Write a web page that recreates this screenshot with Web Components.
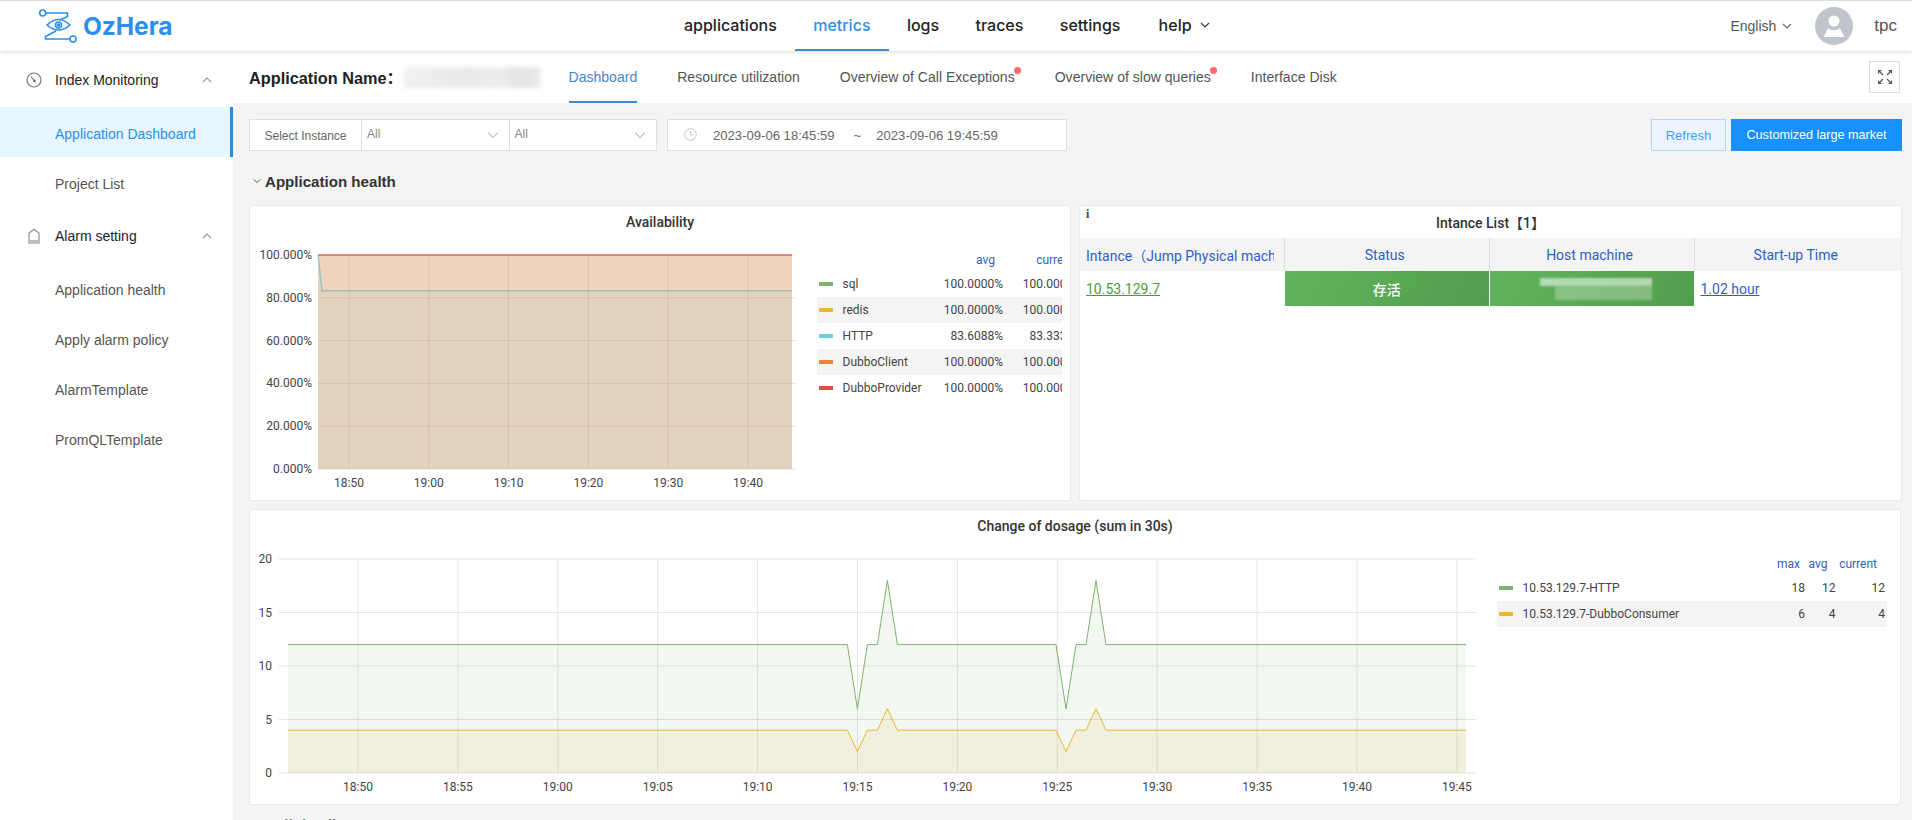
<!DOCTYPE html>
<html lang="en">
<head>
<meta charset="utf-8">
<title>OzHera</title>
<style>
    html, body { margin: 0; height: 100%; overflow: hidden; background: #f4f4f4; }
    body { font-family: "Liberation Sans", "Noto Sans CJK SC", sans-serif; color: #333; }
    #page { display: flex; flex-direction: column; height: 820px; overflow: hidden; }
    #below { display: flex; flex: 1; min-height: 0; }
</style>
</head>
<body>
<div id="page">
    <oz-header></oz-header>
    <div id="below">
        <oz-sidebar></oz-sidebar>
        <oz-main></oz-main>
    </div>
</div>
<script>
"use strict";
const CHEVRON = (size, color, d = 'M1 3l4 4 4-4') => `<svg width="${size}" height="${size}" viewBox="0 0 10 10" fill="none" stroke="${color}" stroke-width="1.1"><path d="${d}"/></svg>`;

class OzHeader extends HTMLElement {
    constructor() {
        super();
        this.attachShadow({ mode: 'open' });
    }
    connectedCallback() {
        const items = ['applications', 'metrics', 'logs', 'traces', 'settings'];
        this.shadowRoot.innerHTML = `
            <style>
                :host {
                    display: flex;
                    align-items: center;
                    flex: none;
                    height: 50px;
                    background: #fff;
                    border-top: 1px solid #dedede;
                    box-shadow: 0 1px 4px rgba(0, 0, 0, .14);
                    position: relative;
                    z-index: 2;
                }
                .logo { display: flex; align-items: center; margin-left: 38px; width: 646px; }
                .logo span { font: 700 24.6px Inter, sans-serif; color: #2a8fee; margin-left: 5px; letter-spacing: -.1px; }
                nav { display: flex; height: 100%; }
                nav a {
                    font: 500 16px Inter, sans-serif;
                    color: #222;
                    padding: 0 18.2px;
                    display: flex;
                    align-items: center;
                    box-sizing: border-box;
                    border-bottom: 2px solid transparent;
                    gap: 8px;
                }
                nav a:first-child { padding-left: 0; }
                nav a:last-child { padding-left: 20px; }
                nav a.active { color: #2a8fee; border-bottom-color: #3d8ad2; }
                .right { display: flex; align-items: center; margin-left: auto; font-size: 14px; color: #555; }
                .lang { display: flex; align-items: center; gap: 6px; margin-right: 23px; font-size: 14px; }
                .user { margin: 0 15px 0 21px; font-size: 17px; }
            </style>
            <div class="logo">
                <svg width="40" height="36" viewBox="38 9 40 36" fill="none" stroke="#2a8fee" stroke-width="1.6">
                    <circle cx="42.7" cy="14" r="3"/>
                    <path d="M45.7 14H67.5V17.5L60 21"/>
                    <path d="M47 26Q58.5 15 70 26Q58.5 36 47 26Z"/>
                    <circle cx="58.5" cy="26" r="3"/>
                    <circle cx="58.5" cy="26" r="1" fill="#2a8fee"/>
                    <path d="M56 32L45.5 37.5V40H70"/>
                    <circle cx="73" cy="40" r="3"/>
                </svg>
                <span>OzHera</span>
            </div>
            <nav>
                ${items.map(i => `<a class="${i === 'metrics' ? 'active' : ''}">${i}</a>`).join('')}
                <a>help ${CHEVRON(10, '#333')}</a>
            </nav>
            <div class="right">
                <div class="lang">English ${CHEVRON(10, '#666')}</div>
                <svg width="38" height="38" viewBox="0 0 38 38">
                    <circle cx="19" cy="19" r="19" fill="#c0c4cc"/>
                    <circle cx="19" cy="14" r="5.5" fill="#fff"/>
                    <path d="M8.5 30L13 21.5Q19 25 25 21.5L29.5 30Z" fill="#fff"/>
                </svg>
                <span class="user">tpc</span>
            </div>
        `;
    }
}
customElements.define('oz-header', OzHeader);

class OzSideItem extends HTMLElement {
    constructor() {
        super();
        this.attachShadow({ mode: 'open' });
    }
    connectedCallback() {
        this.shadowRoot.innerHTML = `
            <style>
                :host {
                    display: flex;
                    align-items: center;
                    height: 50px;
                    box-sizing: border-box;
                    padding-left: 55px;
                    font-size: 14px;
                    color: #555;
                }
                :host([active]) {
                    background: #e6f6fe;
                    color: #2a8fee;
                    border-right: 3px solid #2a8ae4;
                }
                span { position: relative; top: 2px; }
            </style>
            <span><slot></slot></span>
        `;
    }
}
customElements.define('oz-side-item', OzSideItem);

class OzSideGroup extends HTMLElement {
    constructor() {
        super();
        this.attachShadow({ mode: 'open' });
    }
    connectedCallback() {
        this.shadowRoot.innerHTML = `
            <style>
                :host { display: block; }
                .head {
                    display: flex;
                    align-items: center;
                    height: 52px;
                    margin-bottom: 1px;
                    padding: 0 21px 0 26px;
                    font-size: 14px;
                    color: #222;
                }
                .name { margin-left: 13px; flex: 1; }
            </style>
            <div class="head">
                <slot name="icon"></slot>
                <span class="name">${this.getAttribute('label')}</span>
                ${CHEVRON(10, '#999', 'M1 7l4-4 4 4')}
            </div>
            <slot></slot>
        `;
    }
}
customElements.define('oz-side-group', OzSideGroup);

class OzSidebar extends HTMLElement {
    constructor() {
        super();
        this.attachShadow({ mode: 'open' });
    }
    connectedCallback() {
        this.shadowRoot.innerHTML = `
            <style>
                :host { display: block; flex: none; width: 233px; background: #fff; padding-top: 3px; box-sizing: border-box; }
                .alarm { margin-top: 3px; }
            </style>
            <oz-side-group label="Index Monitoring">
                <svg slot="icon" width="16" height="16" viewBox="0 0 16 16" fill="none" stroke="#777" stroke-width="1.2">
                    <circle cx="8" cy="8" r="7"/><path d="M5 4.5L8.5 9"/><circle cx="8.5" cy="9" r=".8" fill="#777"/>
                </svg>
                <oz-side-item active>Application Dashboard</oz-side-item>
                <oz-side-item>Project List</oz-side-item>
            </oz-side-group>
            <oz-side-group class="alarm" label="Alarm setting">
                <svg slot="icon" width="16" height="16" viewBox="0 0 16 16" fill="none" stroke="#888" stroke-width="1.1">
                    <path d="M3 15V5L8 1.5 13 5V15Z"/><path d="M8 .5V2"/><rect x="4" y="12" width="8" height="2.5" fill="#bbb" stroke="none"/>
                </svg>
                <oz-side-item>Application health</oz-side-item>
                <oz-side-item>Apply alarm policy</oz-side-item>
                <oz-side-item>AlarmTemplate</oz-side-item>
                <oz-side-item>PromQLTemplate</oz-side-item>
            </oz-side-group>
        `;
    }
}
customElements.define('oz-sidebar', OzSidebar);

class OzTabs extends HTMLElement {
    constructor() {
        super();
        this.attachShadow({ mode: 'open' });
    }
    connectedCallback() {
        this.shadowRoot.innerHTML = `
            <style>
                :host {
                    display: flex;
                    align-items: stretch;
                    height: 52px;
                    background: #fff;
                    padding: 0 12px 0 16px;
                }
                .name { font-weight: 700; font-size: 16.3px; color: #222; width: 155px; align-self: center; white-space: nowrap; }
                .blur { width: 137px; height: 21px; align-self: center; background: linear-gradient(90deg, #f1f1f1, #e9e9e9 45%, #eeeeee 70%, #e4e4e4 82%, #ebebeb); filter: blur(2px); margin-right: 27.5px; }
                .tabs { display: flex; gap: 40px; flex: 1; }
                .tab { display: flex; align-items: center; font-size: 14.05px; color: #555; position: relative; border-bottom: 2px solid transparent; margin-top: 2px; }
                .tab.active { color: #3d8ad2; border-bottom-color: #3d8ad2; }
                .tab.dot::after {
                    content: "";
                    position: absolute;
                    right: -6.5px;
                    top: 14px;
                    width: 7px;
                    height: 7px;
                    border-radius: 50%;
                    background: #f56c6c;
                }
                .full {
                    align-self: center;
                    width: 31px;
                    height: 32px;
                    box-sizing: border-box;
                    border: 1px solid #ddd;
                    display: flex;
                    align-items: center;
                    justify-content: center;
                }
            </style>
            <div class="name">Application Name：</div>
            <div class="blur"></div>
            <div class="tabs">
                <div class="tab active">Dashboard</div>
                <div class="tab">Resource utilization</div>
                <div class="tab dot">Overview of Call Exceptions</div>
                <div class="tab dot">Overview of slow queries</div>
                <div class="tab">Interface Disk</div>
            </div>
            <div class="full">
                <svg width="16" height="16" viewBox="0 0 16 16" fill="#555" stroke="#555" stroke-width="1.2">
                    <path d="M1 1H5L1 5Z" stroke="none"/><path d="M3 3L6 6"/>
                    <path d="M15 1H11L15 5Z" stroke="none"/><path d="M13 3L10 6"/>
                    <path d="M1 15H5L1 11Z" stroke="none"/><path d="M3 13L6 10"/>
                    <path d="M15 15H11L15 11Z" stroke="none"/><path d="M13 13L10 10"/>
                </svg>
            </div>
        `;
    }
}
customElements.define('oz-tabs', OzTabs);

class OzFilters extends HTMLElement {
    constructor() {
        super();
        this.attachShadow({ mode: 'open' });
    }
    connectedCallback() {
        const select = `<div class="select"><span>All</span>${CHEVRON(12, '#c0c4cc')}</div>`;
        this.shadowRoot.innerHTML = `
            <style>
                :host { display: flex; height: 32px; margin-top: 16px; }
                .group { display: flex; background: #fff; border: 1px solid #dcdfe6; box-sizing: border-box; width: 408px; margin-left: -1px; }
                .label { width: 112px; flex: none; box-sizing: border-box; font-size: 12px; color: #666; display: flex; align-items: center; justify-content: center; border-right: 1px solid #dcdfe6; padding-top: 1px; }
                .select { flex: 1; display: flex; align-items: center; justify-content: space-between; padding: 0 10px 0 5px; font-size: 12px; color: #888; }
                .select span { position: relative; top: -1px; }
                .select + .select { border-left: 1px solid #dcdfe6; }
                .date { margin-left: 10px; width: 400px; box-sizing: border-box; display: flex; align-items: center; background: #fff; border: 1px solid #dcdfe6; padding-left: 16px; font-size: 13.1px; color: #666; }
                .date svg { margin-right: 16px; position: relative; top: -1px; }
                .tilde { margin: 0 15px 0 19px; }
                .actions { margin-left: auto; display: flex; gap: 5px; margin-right: -1px; }
                button { font: 13px "Liberation Sans", sans-serif; border-radius: 0; cursor: pointer; box-sizing: border-box; height: 32px; }
                .plain { width: 75px; background: #ecf5ff; border: 1px solid #b3d8ff; color: #409eff; }
                .primary { width: 171px; background: #1890ff; border: 1px solid #1890ff; color: #fff; font-size: 12.6px; }
            </style>
            <div class="group">
                <div class="label">Select Instance</div>
                ${select}${select}
            </div>
            <div class="date">
                <svg width="13" height="13" viewBox="0 0 13 13" fill="none" stroke="#c0c4cc" stroke-width="1"><circle cx="6.5" cy="6.5" r="5.8"/><path d="M6.5 3V6.8H9.5"/></svg>
                <span>2023-09-06 18:45:59</span><span class="tilde">~</span><span>2023-09-06 19:45:59</span>
            </div>
            <div class="actions">
                <button class="plain">Refresh</button>
                <button class="primary">Customized large market</button>
            </div>
        `;
    }
}
customElements.define('oz-filters', OzFilters);

class OzSection extends HTMLElement {
    constructor() {
        super();
        this.attachShadow({ mode: 'open' });
    }
    connectedCallback() {
        this.shadowRoot.innerHTML = `
            <style>
                :host { display: flex; align-items: center; height: 55px; box-sizing: border-box; padding: 5px 0 0 3px; font-weight: 700; font-size: 15.1px; color: #333; gap: 4px; }
            </style>
            ${CHEVRON(8, '#444')}<span><slot></slot></span>
        `;
    }
}
customElements.define('oz-section', OzSection);

class OzPanel extends HTMLElement {
    constructor() {
        super();
        this.attachShadow({ mode: 'open' });
    }
    connectedCallback() {
        this.shadowRoot.innerHTML = `
            <style>
                :host {
                    display: block;
                    height: 294px;
                    box-sizing: border-box;
                    background: #fff;
                    box-shadow: 0 0 0 1px #e9e9e9;
                    border-radius: 2px;
                    position: relative;
                    overflow: hidden;
                    min-width: 0;
                }
                .title { height: 32px; display: flex; align-items: center; justify-content: center; font: 500 14px Roboto, "Noto Sans CJK SC", sans-serif; color: #333; }
                .body { display: flex; }
            </style>
            <div class="title">${this.getAttribute('label')}</div>
            <div class="body"><slot></slot></div>
        `;
    }
}
customElements.define('oz-panel', OzPanel);

const COLORS = { green: '#7eb26d', yellow: '#eab839', cyan: '#6ed0e0', orange: '#ef843c', red: '#e24d42' };

function dosage(base, low, high) {
    const pts = [[38, base]];
    for (const start of [597.4, 806]) {
        pts.push([start, base], [start + 10, low], [start + 20, base], [start + 30, base], [start + 40, high], [start + 50, base]);
    }
    pts.push([1216, base]);
    return pts;
}

const CHARTS = {
    availability: {
        width: 567, left: 68, right: 546, top: 17, bottom: 231, max: 100,
        yTicks: [0, 20, 40, 60, 80, 100], yFormat: v => v.toFixed(3) + '%', yRight: 62,
        xStart: 99, xStep: 79.8, xLabels: ['18:50', '19:00', '19:10', '19:20', '19:30', '19:40'],
        series: [
            { color: COLORS.green, hideLine: true, points: [[68, 100], [542, 100]] },
            { color: COLORS.yellow, hideLine: true, points: [[68, 100], [542, 100]] },
            { color: COLORS.cyan, lineWidth: 1.5, lineOpacity: .7, points: [[68, 100], [72, 83.33], [542, 83.33]] },
            { color: COLORS.orange, hideLine: true, points: [[68, 100], [542, 100]] },
            { color: COLORS.red, lineWidth: 2, lineOpacity: .6, points: [[68, 100], [542, 100]] }
        ]
    },
    dosage: {
        width: 1247, left: 28.5, right: 1226, top: 17, bottom: 231, max: 20,
        yTicks: [0, 5, 10, 15, 20], yFormat: v => String(v), yRight: 22,
        xStart: 108, xStep: 99.9, xLabels: ['18:50', '18:55', '19:00', '19:05', '19:10', '19:15', '19:20', '19:25', '19:30', '19:35', '19:40', '19:45'],
        series: [
            { color: COLORS.green, points: dosage(12, 6, 18) },
            { color: COLORS.yellow, points: dosage(4, 2, 6) }
        ]
    }
};

class OzGraph extends HTMLElement {
    constructor() {
        super();
        this.attachShadow({ mode: 'open' });
    }
    connectedCallback() {
        const c = CHARTS[this.getAttribute('chart')];
        const y = v => c.bottom - (v / c.max) * (c.bottom - c.top);
        const hLines = c.yTicks.map(t => `<line x1="${c.left}" x2="${c.right}" y1="${y(t)}" y2="${y(t)}" stroke="#e4e4e4"/>`).join('');
        const vLines = c.xLabels.map((_, i) => {
            const x = c.xStart + i * c.xStep;
            return `<line x1="${x}" x2="${x}" y1="${c.top}" y2="${c.bottom}" stroke="#e4e4e4"/>`;
        }).join('');
        const yText = c.yTicks.map(t => `<text x="${c.yRight}" y="${y(t) + 4}" text-anchor="end">${c.yFormat(t)}</text>`).join('');
        const xText = c.xLabels.map((l, i) => `<text x="${c.xStart + i * c.xStep}" y="249" text-anchor="middle">${l}</text>`).join('');
        const series = c.series.map(s => {
            const line = s.points.map(p => `${p[0]},${y(p[1])}`).join(' ');
            const first = s.points[0][0];
            const last = s.points[s.points.length - 1][0];
            const stroke = s.hideLine ? '' : `<polyline points="${line}" fill="none" stroke="${s.color}" stroke-width="${s.lineWidth || 1}" stroke-opacity="${s.lineOpacity || 1}"/>`;
            return `<polygon points="${first},${c.bottom} ${line} ${last},${c.bottom}" fill="${s.color}" fill-opacity=".1"/>${stroke}`;
        }).join('');
        this.shadowRoot.innerHTML = `
            <style>
                :host { display: block; flex: none; width: ${c.width}px; height: 262px; }
                svg { display: block; }
                text { font: 12px Roboto, sans-serif; fill: #444; }
            </style>
            <svg width="${c.width}" height="262" viewBox="0 0 ${c.width} 262">
                ${hLines}${vLines}${series}${yText}${xText}
            </svg>
        `;
    }
}
customElements.define('oz-graph', OzGraph);

class OzLegend extends HTMLElement {
    constructor() {
        super();
        this.attachShadow({ mode: 'open' });
    }
    connectedCallback() {
        const cols = this.getAttribute('cols');
        const heads = this.getAttribute('heads').split(',');
        const rows = JSON.parse(this.getAttribute('rows'));
        this.shadowRoot.innerHTML = `
            <style>
                :host { display: block; flex: none; width: ${this.getAttribute('width')}px; overflow: hidden; padding-top: 10px; font: 12px Roboto, sans-serif; color: #444; }
                .row { display: grid; grid-template-columns: ${cols}; height: 26px; align-items: center; white-space: nowrap; }
                .row.alt { background: #f4f4f4; }
                .head { height: 23px; color: #2f5fc4; }
                .head div { text-align: right; padding-right: 8px; }
                .val { text-align: right; }
                .name { display: flex; align-items: center; padding-left: 2px; }
                i { width: 14px; height: 4px; margin-right: 9.5px; flex: none; }
            </style>
            <div class="row head"><span></span>${heads.map(h => `<div>${h}</div>`).join('')}</div>
            ${rows.map((r, idx) => `
                <div class="row ${idx % 2 ? 'alt' : ''}">
                    <div class="name"><i style="background:${COLORS[r[0]]}"></i>${r[1]}</div>
                    ${r.slice(2).map(v => `<div class="val">${v}</div>`).join('')}
                </div>`).join('')}
        `;
    }
}
customElements.define('oz-legend', OzLegend);

class OzInstances extends HTMLElement {
    constructor() {
        super();
        this.attachShadow({ mode: 'open' });
    }
    connectedCallback() {
        this.shadowRoot.innerHTML = `
            <style>
                :host { display: block; width: 100%; font: 14px Roboto, "Noto Sans CJK SC", sans-serif; }
                .info { position: absolute; left: 6px; top: 1px; font: 700 12px "Liberation Serif", serif; color: #444; }
                .grid { display: grid; grid-template-columns: 205px 204.5px 205px 1fr; }
                .th {
                    height: 33px;
                    background: #f4f4f4;
                    color: #2f5fc4;
                    display: flex;
                    align-items: center;
                    justify-content: center;
                    border-right: 1px solid #dedede;
                    box-sizing: border-box;
                    white-space: nowrap;
                    padding-right: 4px;
                    min-width: 0;
                }
                .th:first-child { justify-content: flex-start; padding: 0 10px 0 6px; }
                .th:first-child span { overflow: hidden; }
                .th:nth-child(4) { border-right: 0; }
                .td { height: 35px; display: flex; align-items: center; box-sizing: border-box; }
                .ip { color: #4a9a3e; text-decoration: underline; padding-left: 6px; }
                .live { background: linear-gradient(120deg, #62b35e, #519e4c); color: #fff; justify-content: center; border-right: 1px solid #fff; position: relative; font-weight: 500; }
                .mask { position: absolute; background: rgba(255, 255, 255, .55); filter: blur(1px); }
                .up { color: #2f5fc4; text-decoration: underline; padding-left: 6px; }
            </style>
            <div class="info">i</div>
            <div class="grid">
                <div class="th"><span>Intance（Jump Physical machine）</span></div>
                <div class="th">Status</div>
                <div class="th">Host machine</div>
                <div class="th">Start-up Time</div>
                <div class="td ip">10.53.129.7</div>
                <div class="td live">存活</div>
                <div class="td live">
                    <div class="mask" style="left:50px;top:7px;width:112px;height:8px"></div>
                    <div class="mask" style="left:65px;top:15px;width:97px;height:14px;opacity:.5"></div>
                </div>
                <div class="td up">1.02 hour</div>
            </div>
        `;
    }
}
customElements.define('oz-instances', OzInstances);

class OzMain extends HTMLElement {
    constructor() {
        super();
        this.attachShadow({ mode: 'open' });
    }
    connectedCallback() {
        const rows1 = [
            ['green', 'sql', '100.0000%', '100.0000%'],
            ['yellow', 'redis', '100.0000%', '100.0000%'],
            ['cyan', 'HTTP', '83.6088%', '83.3333%'],
            ['orange', 'DubboClient', '100.0000%', '100.0000%'],
            ['red', 'DubboProvider', '100.0000%', '100.0000%']
        ];
        const rows2 = [
            ['green', '10.53.129.7-HTTP', '18', '12', '12'],
            ['yellow', '10.53.129.7-DubboConsumer', '6', '4', '4']
        ];
        this.shadowRoot.innerHTML = `
            <style>
                :host { display: block; flex: 1; min-width: 0; }
                .content { padding: 0 11px 0 17px; }
                .row { display: grid; grid-template-columns: 820px 821px; gap: 10px; }
                .wide { margin: 10px 1px 0 0; }
                .next { height: 35px; color: #777; }
            </style>
            <oz-tabs></oz-tabs>
            <div class="content">
                <oz-filters></oz-filters>
                <oz-section>Application health</oz-section>
                <div class="row">
                    <oz-panel label="Availability">
                        <oz-graph chart="availability"></oz-graph>
                        <oz-legend width="245" cols="126px 60px 79px" heads="avg,current" rows='${JSON.stringify(rows1)}'></oz-legend>
                    </oz-panel>
                    <oz-panel label="Intance List【1】">
                        <oz-instances></oz-instances>
                    </oz-panel>
                </div>
                <oz-panel class="wide" label="Change of dosage (sum in 30s)">
                    <oz-graph chart="dosage"></oz-graph>
                    <oz-legend width="390" cols="280px 28px 30.5px 49.5px" heads="max,avg,current" rows='${JSON.stringify(rows2)}'></oz-legend>
                </oz-panel>
                <oz-section class="next">Call details</oz-section>
            </div>
        `;
    }
}
customElements.define('oz-main', OzMain);
</script>
</body>
</html>
